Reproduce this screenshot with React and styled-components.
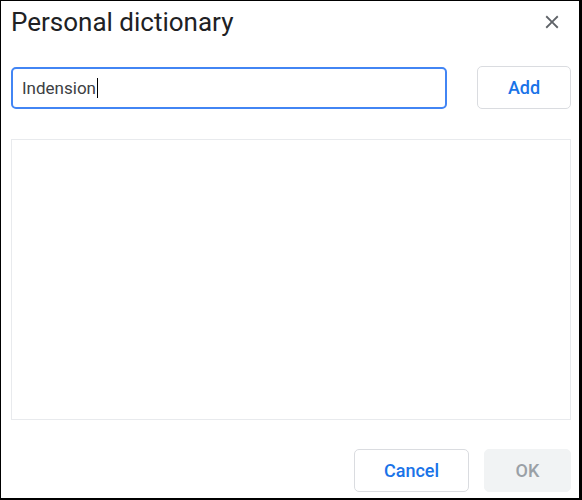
import { useState } from "react";
import styled, { createGlobalStyle } from "styled-components";

const GlobalStyle = createGlobalStyle`
  body {
    margin: 0;
    background: #ffffff;
    font-family: Roboto, "Liberation Sans", sans-serif;
  }
`;

function CloseIcon() {
  return (
    <svg width="22" height="22" viewBox="0 0 24 24" fill="#5f6368">
      <path d="M19 6.41 17.59 5 12 10.59 6.41 5 5 6.41 10.59 12 5 17.59 6.41 19 12 13.41 17.59 19 19 17.59 13.41 12z" />
    </svg>
  );
}

function App() {
  const [word, setWord] = useState("Indension");

  return (
    <>
      <GlobalStyle />
      <Dialog>
        <Header>
          <Title>Personal dictionary</Title>
          <CloseButton aria-label="Close">
            <CloseIcon />
          </CloseButton>
        </Header>

        <InputRow>
          <WordField>
            <span>{word}</span>
            <Caret />
          </WordField>
          <Button onClick={() => setWord("")}>Add</Button>
        </InputRow>

        <WordList />

        <Footer>
          <Button $width={115}>Cancel</Button>
          <Button $width={87} disabled>
            OK
          </Button>
        </Footer>
      </Dialog>
    </>
  );
}

const Dialog = styled.div`
  box-sizing: border-box;
  width: 582px;
  height: 500px;
  border-style: solid;
  border-color: #000;
  border-width: 1px 3px 2px 1px;
  padding: 0 8px 0 10px;
  display: flex;
  flex-direction: column;
  background: #fff;
`;

const Header = styled.div`
  display: flex;
  align-items: center;
  justify-content: space-between;
  height: 41px;
`;

const Title = styled.h1`
  margin: 0;
  font-family: Roboto, "Liberation Sans", sans-serif;
  font-size: 26px;
  font-weight: 400;
  color: #202124;
`;

const CloseButton = styled.button`
  display: flex;
  align-items: center;
  justify-content: center;
  padding: 0;
  margin-right: 7px;
  margin-top: 1px;
  width: 24px;
  height: 24px;
  border: none;
  background: transparent;
  cursor: pointer;
`;

const InputRow = styled.div`
  display: flex;
  align-items: flex-end;
  gap: 30px;
  margin-top: 24px;
`;

const WordField = styled.div`
  box-sizing: border-box;
  flex: 1;
  height: 42px;
  border: 2px solid #4285f4;
  border-radius: 5px;
  padding: 0 9px;
  display: flex;
  align-items: center;
  font-size: 17px;
  color: #3c4043;
`;

const Caret = styled.span`
  display: inline-block;
  width: 1px;
  height: 20px;
  margin-left: 1px;
  background: #000;
`;

const Button = styled.button`
  box-sizing: border-box;
  width: ${(p) => p.$width || 94}px;
  height: 43px;
  border-radius: 5px;
  border: 1px solid ${(p) => (p.disabled ? "#f1f3f4" : "#dadce0")};
  background: ${(p) => (p.disabled ? "#f1f3f4" : "#fff")};
  color: ${(p) => (p.disabled ? "#9aa0a6" : "#1a73e8")};
  font-family: Roboto, "Liberation Sans", sans-serif;
  font-size: 18px;
  font-weight: 500;
  cursor: pointer;
`;

const WordList = styled.div`
  box-sizing: border-box;
  height: 281px;
  margin-top: 30px;
  border: 1px solid #e8eaed;
`;

const Footer = styled.div`
  display: flex;
  justify-content: flex-end;
  gap: 15px;
  margin-top: 29px;
`;

export default App;
